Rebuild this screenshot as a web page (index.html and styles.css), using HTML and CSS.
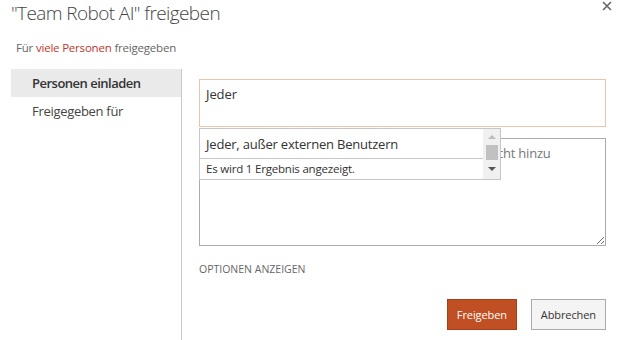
FILE: index.html
```html
<!DOCTYPE html>
<html lang="de">
<head>
    <meta charset="UTF-8">
    <title>"Team Robot AI" freigeben</title>
    <link rel="stylesheet" href="styles.css">
</head>
<body>
<div class="dialog">
    <div class="header">
        <h1 class="title">"Team Robot AI" freigeben</h1>
        <button class="close" type="button" aria-label="Schließen">
            <svg width="10" height="10" viewBox="0 0 10 10"><path d="M1 1 L9 9 M9 1 L1 9" stroke="#666" stroke-width="1.6" fill="none"/></svg>
        </button>
    </div>
    <p class="shared">Für <a href="#">viele Personen</a> freigegeben</p>
    <div class="content">
        <nav class="side">
            <div class="side-item active">Personen einladen</div>
            <div class="side-item">Freigegeben für</div>
        </nav>
        <div class="main">
            <div class="fields">
                <div class="people">Jeder</div>
                <textarea class="message" placeholder="Fügen Sie Ihrer Einladung eine persönliche Nachricht hinzu"></textarea>
                <div class="suggest">
                    <div class="suggest-list">
                        <div class="suggest-item">Jeder, außer externen Benutzern</div>
                        <div class="suggest-count">Es wird 1 Ergebnis angezeigt.</div>
                    </div>
                    <div class="scroll">
                        <span class="arrow up"></span>
                        <span class="thumb"></span>
                        <span class="arrow down"></span>
                    </div>
                </div>
            </div>
            <div class="options">OPTIONEN ANZEIGEN</div>
            <div class="actions">
                <button class="btn primary" type="button">Freigeben</button>
                <button class="btn" type="button">Abbrechen</button>
            </div>
        </div>
    </div>
</div>
</body>
</html>
```

FILE: styles.css
```css
body {
    margin: 0;
    font-family: 'Open Sans', 'Noto Sans', sans-serif;
    color: #444;
    background: #fff;
}
.dialog {
    height: 340px;
    padding-left: 11px;
    padding-right: 11px;
    display: flex;
    flex-direction: column;
    box-sizing: border-box;
}
.header {
    display: flex;
    justify-content: space-between;
    align-items: flex-start;
}
.title {
    margin: 0;
    font-size: 19px;
    font-weight: 300;
    line-height: 26px;
    color: #444;
    letter-spacing: -0.6px;
}
.close {
    border: none;
    background: none;
    padding: 0;
    margin-top: 1px;
    width: 10px;
    height: 10px;
    display: flex;
}
.shared {
    margin: 14px 0 0 5px;
    font-size: 11.5px;
    line-height: 16px;
    color: #666;
    letter-spacing: -0.2px;
}
.shared a {
    color: #c1362b;
    text-decoration: none;
}
.content {
    flex: 1;
    display: flex;
    margin-top: 13px;
}
.side {
    width: 170px;
    border-right: 1px solid #c8c8c8;
}
.side-item {
    height: 28px;
    line-height: 28px;
    padding-left: 21px;
    font-size: 13px;
    color: #444;
    letter-spacing: -0.3px;
}
.side-item.active {
    background: #eaeaea;
    font-weight: 600;
    color: #333;
    letter-spacing: -0.5px;
}
.main {
    flex: 1;
    padding-left: 17px;
    padding-top: 10px;
}
.fields {
    position: relative;
    width: 407px;
}
.people {
    height: 48px;
    border: 1px solid #eac4ab;
    box-sizing: border-box;
    padding: 5px 6px;
    font-size: 13px;
    color: #333;
    letter-spacing: -0.1px;
}
.message {
    display: block;
    margin-top: 11px;
    width: 407px;
    height: 108px;
    border: 1px solid #ababab;
    box-sizing: border-box;
    padding: 5px 6px;
    font-family: inherit;
    font-size: 13px;
    letter-spacing: -0.2px;
    resize: both;
    outline: none;
}
.message::placeholder {
    color: #777;
}
.suggest {
    position: absolute;
    left: 0;
    top: 49px;
    width: 302px;
    height: 52px;
    display: flex;
    background: #fff;
    border: 1px solid #c6c6c6;
    box-sizing: border-box;
}
.suggest-list {
    flex: 1;
}
.suggest-item {
    height: 29px;
    line-height: 30px;
    padding-left: 6px;
    font-size: 13px;
    color: #333;
    border-bottom: 1px solid #c6c6c6;
    letter-spacing: -0.2px;
}
.suggest-count {
    padding-left: 6px;
    font-size: 11.5px;
    line-height: 20px;
    color: #333;
    letter-spacing: -0.2px;
}
.scroll {
    width: 17px;
    background: #f0f0f0;
    display: flex;
    flex-direction: column;
    align-items: center;
}
.arrow {
    width: 0;
    height: 0;
    border-left: 4px solid transparent;
    border-right: 4px solid transparent;
}
.arrow.up {
    margin-top: 6px;
    border-bottom: 4px solid #bdbdbd;
}
.arrow.down {
    margin-top: 7px;
    border-top: 4px solid #555;
}
.thumb {
    margin-top: 6px;
    width: 12px;
    height: 15px;
    background: #c1c1c1;
}
.options {
    margin-top: 16px;
    font-size: 10.5px;
    color: #666;
    letter-spacing: 0;
}
.actions {
    margin-top: 23px;
    width: 407px;
    display: flex;
    justify-content: flex-end;
    gap: 14px;
}
.btn {
    height: 31px;
    padding: 0 9px;
    border: 1px solid #ababab;
    background: #f4f4f4;
    color: #333;
    font-family: inherit;
    font-size: 11px;
    letter-spacing: -0.1px;
}
.btn.primary {
    background: #c14f24;
    border-color: #a83f18;
    color: #fff;
}
```
